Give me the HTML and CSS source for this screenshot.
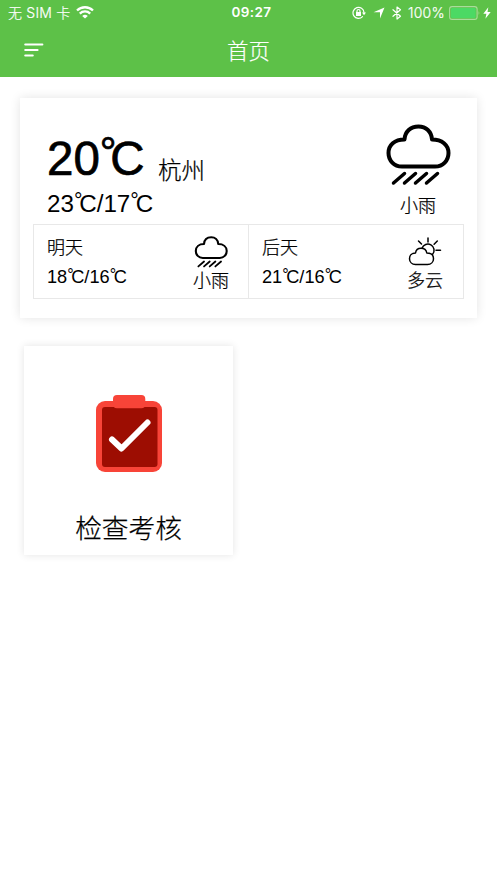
FILE: index.html
```html
<!DOCTYPE html>
<html lang="zh-CN">
<head>
<meta charset="utf-8">
<title>首页</title>
<link rel="stylesheet" href="styles.css">
</head>
<body>
<header class="header">
  <div class="status">
    <div class="status-left">
      <span>无 SIM 卡</span>
      <svg class="wifi" viewBox="0 0 18 13"><path d="M1 4.500A11.500 11.500 0 0 1 17 4.500M3.800 7.600A7.400 7.400 0 0 1 14.200 7.600"/><path class="solid" d="M6.200 9.900A4.300 4.300 0 0 1 11.800 9.900L9 12.600Z"/></svg>
    </div>
    <div class="clock">09:27</div>
    <div class="status-right">
      <svg class="lock" viewBox="0 0 14 14"><path d="M10.500 10.700A5.500 5.500 0 1 1 12 6.500"/><path class="fill" d="M10 6.500h4l-2 2.700zM4 6h5v4H4z"/><path d="M5 6.200V5a1.500 1.500 0 0 1 3 0v1.200"/></svg>
      <svg class="arrow" viewBox="0 0 12 12"><path d="M11.500.5L7 11.500V5.300L.5 5.200Z"/></svg>
      <svg class="bt" viewBox="0 0 10 14"><path d="M1 3.700L8.500 10.200L5 13V1L8.500 3.800L1 10.300"/></svg>
      <span class="percent">100%</span>
      <svg class="battery" viewBox="0 0 32 14"><rect class="shell" x=".6" y=".6" width="27.500" height="12.800" rx="2.500"/><rect class="charge" x="2" y="2" width="24.700" height="10" rx="1.300"/><path class="cap" d="M29.600 5q1.600 2 0 4z"/></svg>
      <svg class="bolt" viewBox="0 0 8 12"><path d="M5.300.3L.3 6.800h3.100L2.400 11.800L7.700 5H4.500Z"/></svg>
    </div>
  </div>
  <nav class="nav">
    <svg class="menu" viewBox="0 0 20 15"><path d="M1.200 1.500h17.200M1.200 7h12.400M1.200 12.600h7.600"/></svg>
    <h1 class="title">首页</h1>
  </nav>
</header>
<main class="main">
  <section class="weather">
    <div class="today">
      <div class="today-info">
        <div class="now"><span class="now-temp">20<span class="ring">°</span>C</span><span class="city">杭州</span></div>
        <div class="range">23<span class="ring">°</span>C/17<span class="ring">°</span>C</div>
      </div>
      <div class="today-sky">
        <svg class="rain" viewBox="0 0 66 62"><path d="M17 42.500C9 42.500 3.500 36.500 3.500 29C3.500 21 9.500 15.500 19.500 15.500C20 7.500 25.500 2.500 33.500 2.500C41 2.500 46.500 7.500 47 15.500C57 15.500 63.500 21 63.500 29C63.500 36.500 58 42.500 50 42.500Z"/><path class="drops" d="M8.500 59L19.500 49.500M19.500 59L30.500 49.500M30.500 59L41.500 49.500M41.500 59L52.500 49.500"/></svg>
        <div class="sky-name">小雨</div>
      </div>
    </div>
    <div class="forecast">
      <div class="day">
        <div><div class="day-name">明天</div><div class="day-range">18<span class="ring">°</span>C/16<span class="ring">°</span>C</div></div>
        <div class="day-sky">
          <svg class="rain small" viewBox="0 0 66 62"><path d="M17 42.500C9 42.500 3.500 36.500 3.500 29C3.500 21 9.500 15.500 19.500 15.500C20 7.500 25.500 2.500 33.500 2.500C41 2.500 46.500 7.500 47 15.500C57 15.500 63.500 21 63.500 29C63.500 36.500 58 42.500 50 42.500Z"/><path class="drops" d="M8.500 59L19.500 49.500M19.500 59L30.500 49.500M30.500 59L41.500 49.500M41.500 59L52.500 49.500"/></svg>
          <div class="sky-name">小雨</div>
        </div>
      </div>
      <div class="day">
        <div><div class="day-name">后天</div><div class="day-range">21<span class="ring">°</span>C/16<span class="ring">°</span>C</div></div>
        <div class="day-sky">
          <svg class="cloudy" viewBox="0 0 34 30"><path d="M7.500 27.500C4 27.500 1.500 25 1.500 21.700C1.500 18.300 4 16 7.500 16C8 12.800 10.300 11.300 13 11.300C16 11.300 18.300 13 18.800 16C23 16 25.500 18.300 25.500 21.700C25.500 25 23 27.500 19.500 27.500Z"/><path d="M14 11.300A6.200 6.200 0 1 1 24.600 17.300M20 1v4M10.500 4l3 3M29.300 4l-3.200 3.200M28 13.200h4.500"/></svg>
          <div class="sky-name">多云</div>
        </div>
      </div>
    </div>
  </section>
  <section class="tile">
    <svg class="clipboard" viewBox="0 0 66 77"><rect class="frame" y="6" width="66" height="71" rx="9"/><rect class="board" x="6" y="12" width="55.500" height="60" rx="3"/><rect class="frame" x="17" width="32.300" height="13.300" rx="4"/><path class="tick" d="M16 44.500L25.500 53.500L51.500 27.500"/></svg>
    <div class="tile-name">检查考核</div>
  </section>
</main>
</body>
</html>
```
FILE: styles.css
```css
* { box-sizing: border-box; }
body { margin: 0; min-height: 883px; background: #fff; color: #000; font-family: Inter, "Noto Sans CJK SC", sans-serif; font-weight: 300; }
svg { display: block; fill: none; stroke-linecap: round; stroke-linejoin: round; }
.header { height: 77px; background: #5dc148; color: #fff; }
.status { display: grid; grid-template-columns: 1fr auto 1fr; height: 25px; padding: 0 6px 0 8px; align-items: center; font-size: 14px; font-weight: 400; line-height: 25px; }
.status-left, .status-right { display: flex; align-items: center; }
.status-left { gap: 6px; font-weight: 300; letter-spacing: .2px; -webkit-text-stroke: .2px; }
.status-right { justify-content: flex-end; }
.status svg { stroke: #fff; flex: none; }
.wifi { width: 18px; height: 13px; stroke-width: 2.300; }
.wifi path { stroke-linecap: butt; }
.status .wifi .solid { fill: #fff; stroke: none; }
.clock { font-size: 13.500px; font-weight: 600; letter-spacing: .4px; padding-left: 4px; }
.lock { width: 14px; height: 14px; stroke-width: 1.200; margin-right: 7px; }
.lock .fill { fill: #fff; stroke: none; }
.arrow { width: 12px; height: 12px; margin-right: 7px; }
.status .arrow, .status .bolt { fill: #fff; stroke: none; }
.bt { width: 10px; height: 14px; stroke-width: 1.200; margin-right: 6px; }
.percent { width: 38px; margin-right: 3px; font-weight: 300; letter-spacing: .2px; -webkit-text-stroke: .2px; white-space: nowrap; }
.battery { width: 32px; height: 14px; margin-right: 2px; }
.battery .shell { stroke: #a9dc9c; stroke-width: 1.100; }
.battery .charge { fill: #4cd964; stroke: none; }
.battery .cap { fill: #a9dc9c; stroke: none; }
.bolt { width: 8px; height: 12px; }
.nav { display: grid; grid-template-columns: 1fr auto 1fr; height: 50px; align-items: center; }
.menu { width: 20px; height: 15px; margin-left: 24px; stroke: #fff; stroke-width: 2; }
.title { margin: 0; padding-top: 1px; font-size: 21.500px; font-weight: 300; line-height: 30px; -webkit-text-stroke: .2px; }
.main { padding: 21px 20px 0; }
.weather { height: 220px; padding: 26px 13px 0; background: #fff; box-shadow: 0 0 10px rgba(0,0,0,.11); }
.today { display: flex; justify-content: space-between; height: 100px; padding: 0 13px 0 14px; }
.now { display: flex; height: 65px; line-height: 70px; }
.now-temp, .range, .day-range { font-family: "Liberation Sans", sans-serif; white-space: nowrap; }
.now-temp { width: 96px; font-size: 47.500px; -webkit-text-stroke: .7px; }
.city { margin-left: 15px; padding-top: 12px; font-size: 23.500px; }
.range { font-size: 24.200px; line-height: 30px; }
.ring { font-size: .88em; line-height: 0; vertical-align: .2em; letter-spacing: -.15em; }
.city, .sky-name, .day-name, .tile-name { -webkit-text-stroke: .25px; }
.today-sky { width: 66px; text-align: center; }
.rain { width: 66px; height: 62px; stroke: #000; stroke-width: 4; }
.rain .drops { stroke-width: 3.500; }
.sky-name { font-size: 18px; line-height: 20px; white-space: nowrap; }
.today-sky .sky-name { margin-top: 10px; }
.forecast { display: grid; grid-template-columns: 215px 1fr; height: 75px; border: 1px solid #e8e8e8; }
.day { display: flex; justify-content: space-between; padding: 12px 20px 0 13px; }
.day + .day { margin-left: -1px; border-left: 1px solid #e8e8e8; padding-left: 13px; }
.day-name { font-size: 18px; line-height: 22px; }
.day-range { margin-top: 7px; font-size: 18.200px; line-height: 22px; }
.day-sky { display: flex; flex-direction: column; align-items: center; width: 36px; }
.rain.small { width: 34px; height: 32px; margin-top: -1px; }
.cloudy { width: 34px; height: 30px; margin-bottom: 1px; stroke: #000; stroke-width: 1.500; }
.day-sky .sky-name { margin-top: 3px; }
.tile { display: flex; flex-direction: column; align-items: center; width: 209px; height: 209px; margin: 28px 0 0 4px; padding-top: 49px; background: #fff; box-shadow: 0 0 8px rgba(0,0,0,.11); }
.clipboard { width: 66px; height: 77px; }
.frame { fill: #f84438; }
.board { fill: #9d0d02; }
.tick { stroke: #fff; stroke-width: 6; }
.tile-name { margin-top: 37px; font-size: 26.700px; line-height: 38px; }
```
